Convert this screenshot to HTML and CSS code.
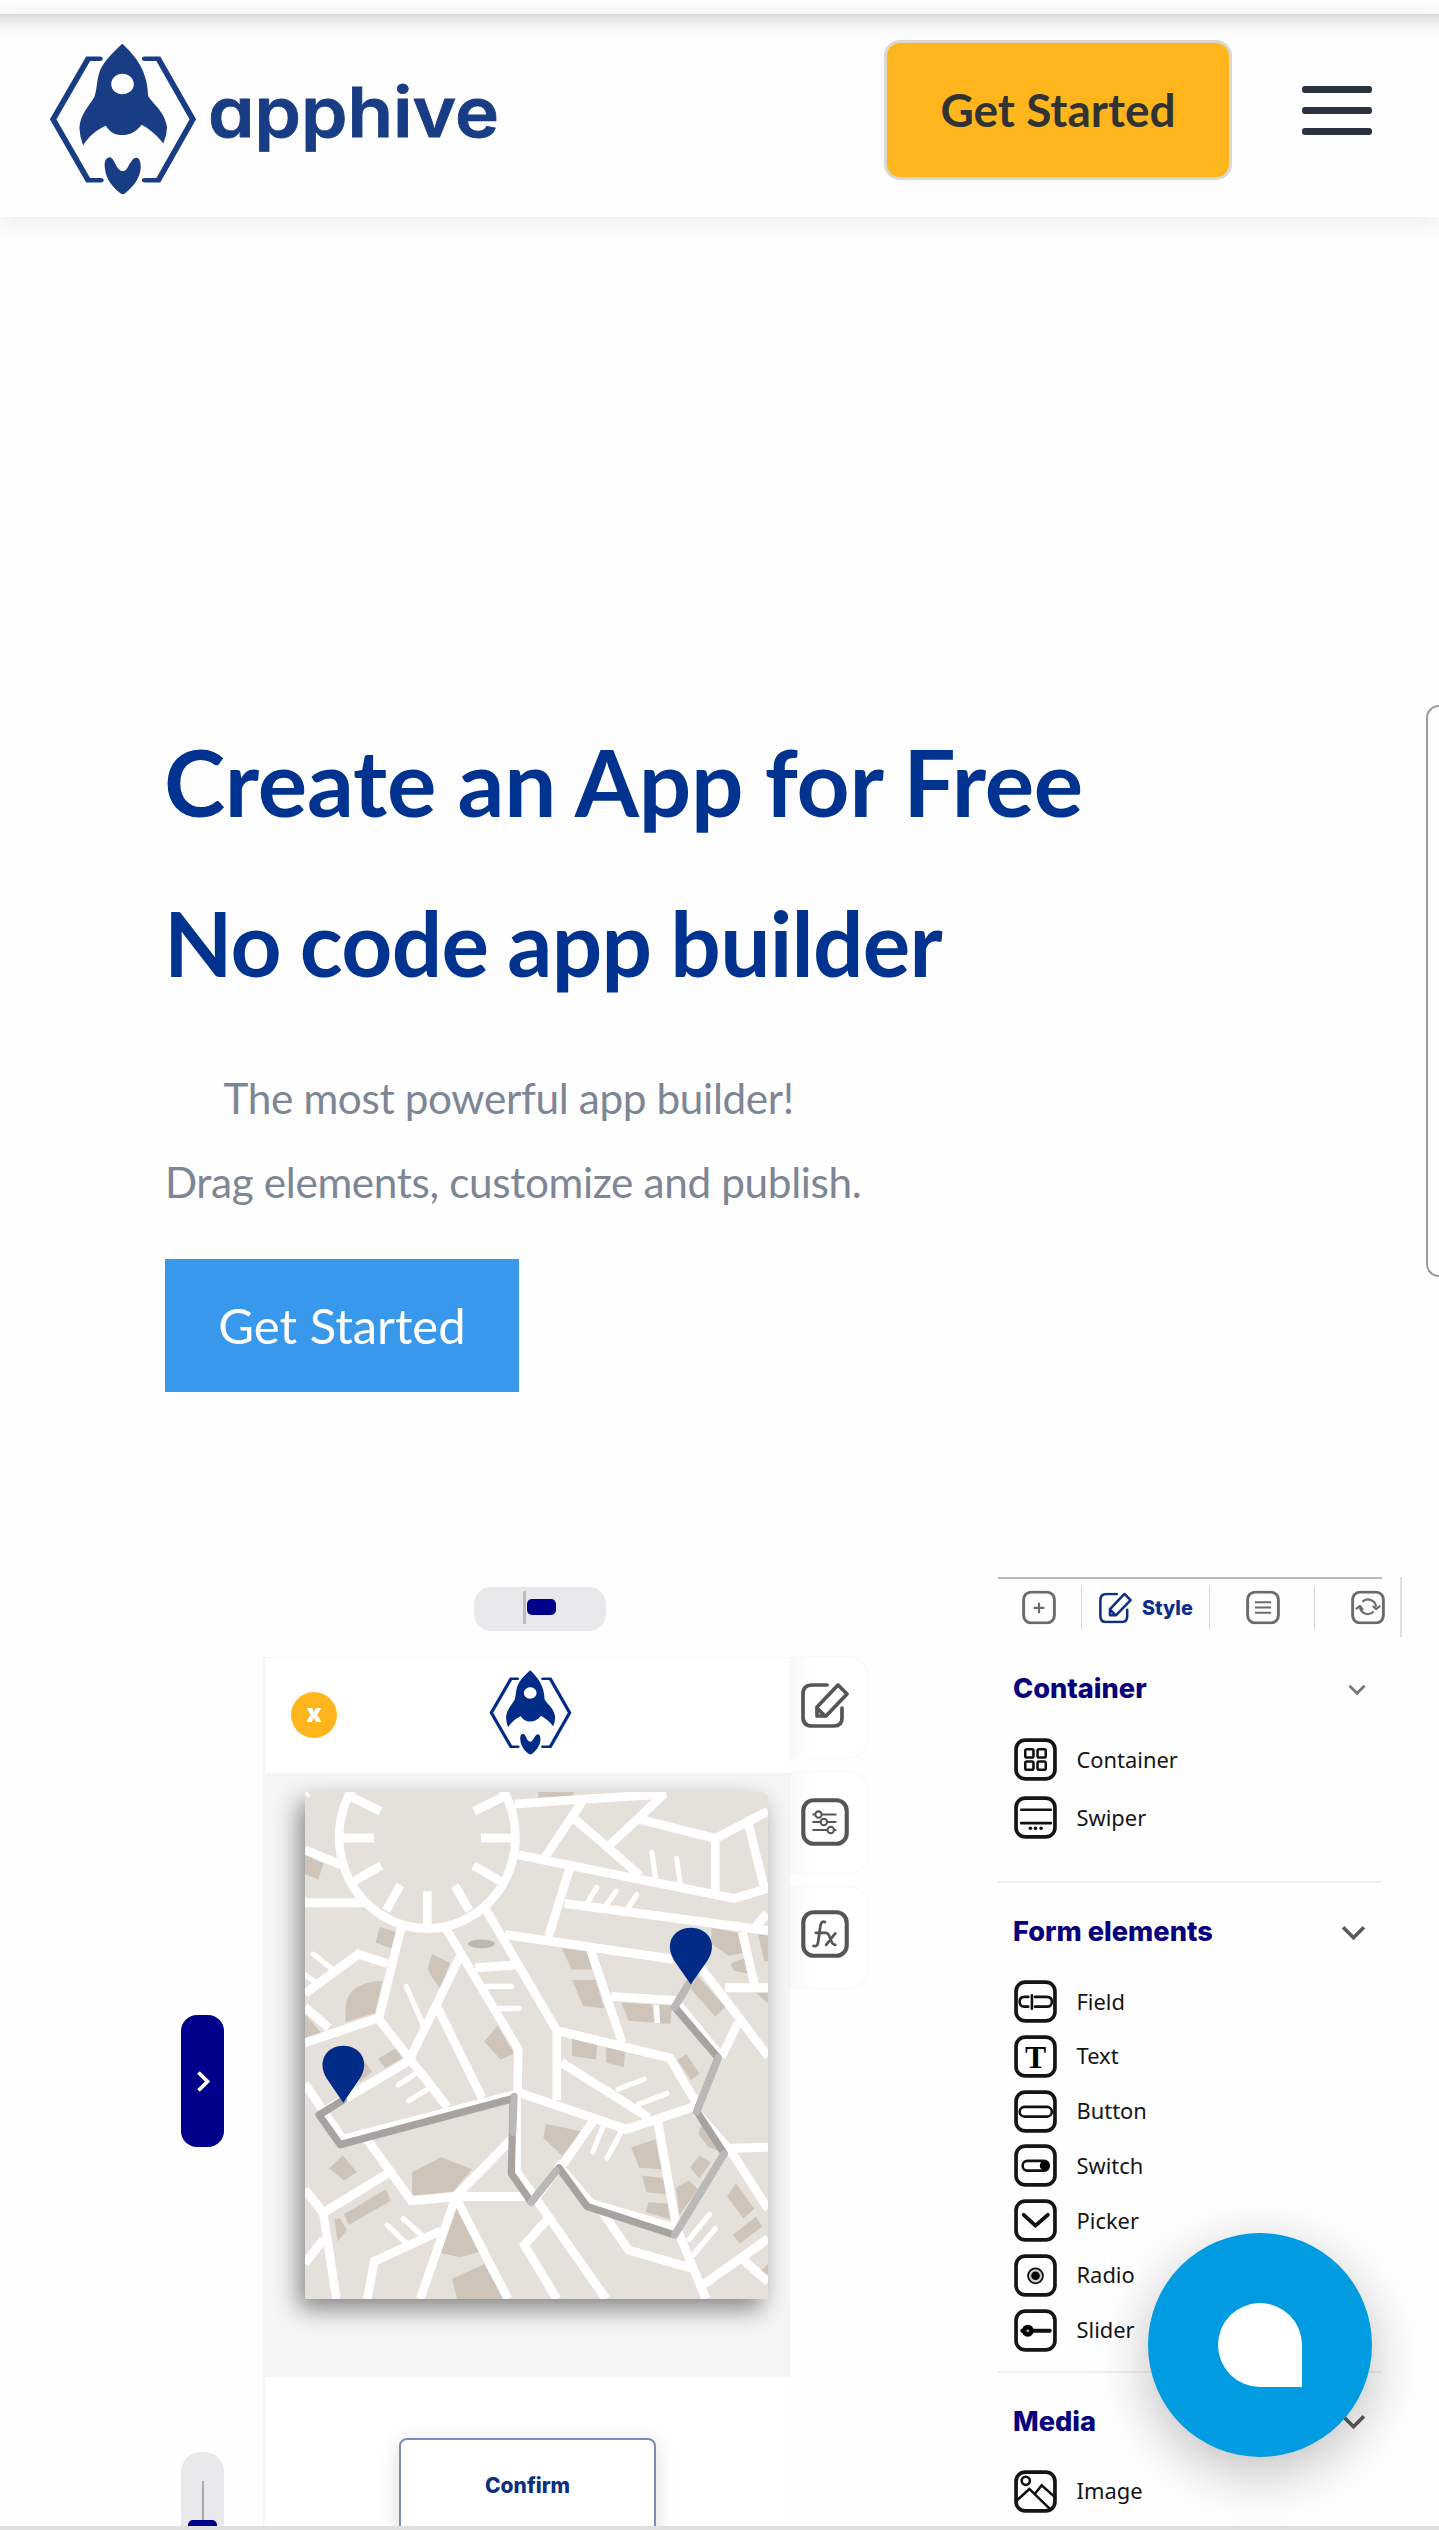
FILE: index.html
```html
<!DOCTYPE html>
<html lang="en">
<head>
<meta charset="utf-8">
<title>Apphive</title>
<link rel="stylesheet" href="styles.css">
</head>
<body>
<svg class="defs" aria-hidden="true">
  <symbol id="rocket" viewBox="108 130 321 454" preserveAspectRatio="none">
    <g fill="none" stroke="currentColor" stroke-width="13" stroke-linecap="round" stroke-linejoin="miter">
      <path d="M218 177H193L117 358L193 540H220"/>
      <path d="M316 177H345L420 358L345 540H316"/>
    </g>
    <path fill="currentColor" fill-rule="evenodd" d="M267 132C295 168 322 212 323 288C333 312 360 335 364 382Q364 406 356 430C346 412 330 390 309 374C296 396 283 405 267 405C251 405 241 397 231 377C210 390 192 412 182 436Q175 412 174 385C175 345 193 322 206 292C213 270 210 245 219 211C228 183 248 156 267 132ZM267 222C254 222 243 236 243 253S254 283 267 283S292 270 292 253S281 222 267 222Z"/>
    <path fill="currentColor" d="M239 471C248 472 250 489 256 501C264 516 271 517 278 503C285 488 289 473 298 473C305 474 307 488 307 502C306 536 288 563 273 579Q268 584 263 579C248 564 231 538 229 502C228 486 230 473 239 471Z"/>
  </symbol>
  <symbol id="box" viewBox="0 0 42 42"><rect x="2" y="2" width="38" height="38" rx="9" fill="none" stroke="currentColor" stroke-width="3.6"/></symbol>
  <symbol id="edit" viewBox="0 0 48 45">
    <g fill="none" stroke="currentColor" stroke-width="3.7" stroke-linejoin="round" stroke-linecap="round">
      <path d="M26 2H11Q2 2 2 11V34Q2 43 11 43H33Q41 43 41 35V25"/>
      <path d="M16 24L37 2L46 11L25 33H16ZM16 25L24 33"/>
    </g>
  </symbol>
</svg>

<div class="status"></div>
<header class="navbar">
  <a class="brand" href="#">
    <svg class="brand-mark"><use href="#rocket"/></svg>
    <svg class="brand-name" viewBox="0 0 290 90"><text x="-1" y="60.5" textLength="291" lengthAdjust="spacingAndGlyphs">apphive</text></svg>
  </a>
  <a class="nav-cta" href="#">Get Started</a>
  <button class="burger" aria-label="Menu"><span></span><span></span><span></span></button>
</header>

<main>
  <section class="hero">
    <div class="hero-copy">
      <h1>Create an App for Free</h1>
      <h2>No code app builder</h2>
      <p><span class="lead">The most powerful app builder!</span><br>Drag elements, customize and publish.</p>
      <a class="hero-cta" href="#">Get Started</a>
    </div>
    <div class="device-edge"></div>
  </section>

  <section class="editor">
    <div class="rail">
      <div class="rail-toggle"><svg viewBox="0 0 12 18"><path d="M3 3L9 9L3 15"/></svg></div>
      <div class="rail-slider"><i></i><b></b></div>
    </div>

    <div class="stage">
      <div class="pill"><i></i><b></b></div>
      <div class="phone">
        <div class="phone-bar">
          <span class="close">x</span>
          <svg class="phone-logo"><use href="#rocket"/></svg>
        </div>
        <div class="phone-body">
          <svg class="map" viewBox="131 88 1344 1419" preserveAspectRatio="none">
            <rect x="131" y="88" width="1344" height="1419" fill="#e5e0da"/>
            <g fill="#cfc4ba">
              <path d="M131 262L184 288L170 332L131 318Z"/>
              <path d="M808 88H912L905 100L808 104Z"/>
              <path d="M348 465L396 480L382 525L336 510Z"/>
              <path d="M500 542L552 566L524 638C505 615 492 600 487 580Z"/>
              <path d="M356 617C290 618 250 645 249 690V732L334 706Z"/>
              <path d="M690 742L734 812L735 822L699 837L651 787Z"/>
              <path d="M131 710L182 765L131 784Z"/>
              <path d="M343 835L392 806L414 832L364 861Z"/>
              <path d="M300 838L326 870L290 900Z"/>
              <path d="M876 525L952 534L964 585H905Z"/>
              <path d="M907 614H974L1000 694L938 687Z"/>
              <path d="M1049 677L1139 683L1144 734L1070 728Z"/>
              <path d="M1159 684H1196L1192 736H1162Z"/>
              <path d="M906 776L979 790L976 837L906 827Z"/>
              <path d="M1005 802L1060 815L1057 858L1005 846Z"/>
              <path d="M1238 822L1276 876L1252 895L1212 838Z"/>
              <path d="M1269 600L1351 689L1322 717L1252 640Z"/>
              <path d="M1311 468L1396 484L1406 538L1361 546L1310 513Z"/>
              <path d="M1366 568L1408 552L1416 597L1375 588Z"/>
              <path d="M1446 486L1475 490V562H1464Z"/>
              <path d="M1440 650H1475V680Z"/>
              <path d="M830 1017L936 1038L877 1106L823 1056Z"/>
              <path d="M1078 1082L1148 1060L1166 1144L1101 1140Z"/>
              <path d="M1110 1162L1170 1168L1178 1214L1122 1208Z"/>
              <path d="M1128 1236L1184 1240L1192 1284L1120 1264Z"/>
              <path d="M1208 1194L1246 1175L1272 1200L1218 1272Z"/>
              <path d="M1276 1106L1310 1124L1275 1170L1249 1138Z"/>
              <path d="M1277 1030L1290 1015L1340 1098L1300 1080L1273 1045Z"/>
              <path d="M1382 1182L1435 1254L1404 1282L1356 1220Z"/>
              <path d="M1440 1276L1458 1304L1394 1352L1372 1328Z"/>
              <path d="M1475 1408V1440L1456 1428Z"/>
              <path d="M240 1105L282 1152L244 1175L202 1142Z"/>
              <path d="M366 1200L380 1232L258 1300L244 1270Z"/>
              <path d="M216 1284L232 1280L253 1314L226 1346Z"/>
              <path d="M442 1152L526 1110L616 1144L560 1206L442 1218Z"/>
              <path d="M570 1244L640 1374L580 1390L526 1378Z"/>
              <path d="M558 1450L651 1410L710 1507H572Z"/>
            </g>
            <g fill="none" stroke="#fff" stroke-width="25">
              <circle cx="486" cy="214" r="256"/>
              <path d="M486 366V460M231 217H331M642 217H742M262 100L350 142M710 100L622 142M352 294L272 338M620 294L700 338M408 348L366 420M566 350L608 420" />
              <path d="M131 250L235 292M131 398H310M131 96L138 88"/>
              <path d="M740 122L940 108L1180 94M940 108L828 270M912 162L1104 322M1175 92L1012 240M1100 164L1322 218L1475 142M1322 218V370M1418 178L1464 356"/>
              <path d="M750 264L1376 386L1475 358M900 300L838 492M885 400L1475 476M1440 464L1472 428"/>
              <path d="M712 487L1200 556M1280 580L1388 716L1475 828"/>
              <path d="M655 415L862 756V950M862 756L1190 832L1268 960M960 530L1052 790M1020 660L1212 672M540 470L750 808L748 928L1064 1032L1268 966M625 580L746 572M875 845L1130 1000"/>
              <path d="M412 460L345 724L545 970M345 720L131 790M131 652L286 542L370 568M131 690L200 748M580 550L435 836M515 690L645 944M430 842L180 984M131 905L240 1060L745 934M308 1056L440 1232L570 1220H770"/>
              <path d="M1400 480L1438 636M1350 636H1475M1388 734L1340 830"/>
              <path d="M1212 680L1340 830M1268 984L1372 1100L1475 1255M1360 1086L1475 1082"/>
              <path d="M745 934V1150L800 1225L870 1136L962 1240L1210 1310M570 1218L745 1045M970 1005L880 1130M1155 1010L1210 1310"/>
              <path d="M570 1218L465 1507M570 1225L720 1507M800 1225L1005 1507M835 1284L768 1356L862 1507M985 1250L1070 1370L1250 1420M1215 1320L1295 1507M1290 1465L1475 1338M1400 1394L1475 1460"/>
              <path d="M131 1200L184 1266L372 1155M184 1266L222 1507M184 1340L131 1408M525 1316L332 1402L312 1507"/>
            </g>
            <g fill="none" stroke="#fff" stroke-width="15" stroke-linecap="round">
              <path d="M1138 258L1148 325M1210 274L1220 345M978 355L948 402M1034 366L1006 404M1094 376L1066 416M425 632L474 740M155 542L210 584M131 600L160 620M650 632H730M695 694H752M452 876L402 908M490 918L432 952M1040 920L1115 892M1100 962L1182 932M996 1025L966 1096M1048 1040L1008 1112M370 1300L428 1354M416 1282L474 1332M1305 1270L1246 1340M1322 1310L1260 1382"/>
              <path d="M1151 684L1154 734" stroke-linecap="butt"/>
            </g>
            <ellipse cx="643" cy="513" rx="39" ry="12" fill="#bdb7b2"/>
            <g fill="none" stroke-width="21" stroke-linejoin="round" stroke-linecap="round">
              <path stroke="#a8a39f" d="M242 950L172 992L233 1075L735 946L730 1156L788 1236L868 1140L950 1248L1204 1328L1348 1100L1268 982L1330 832L1204 690L1245 625"/>
              <path stroke="#bbb9b7" d="M738 940L734 1040M788 1236L860 1148M1204 1328L1348 1100M1268 982L1330 832M1204 690L1245 625"/>
            </g>
            <g fill="#002c88">
              <path d="M242 958L194 890C165 845 190 798 242 798S320 845 290 890Z"/>
              <path d="M1251 627L1203 560C1173 515 1198 468 1251 468S1330 515 1299 560Z"/>
            </g>
          </svg>
        </div>
        <div class="phone-foot"><span class="confirm">Confirm</span></div>
      </div>
    </div>

    <div class="tabs">
      <div class="tab"><svg viewBox="0 0 48 45"><use href="#edit"/></svg></div>
      <div class="tab"><svg viewBox="0 0 42 42"><use href="#box"/>
        <g fill="none" stroke="currentColor" stroke-width="1.8"><path d="M10 14.5H12M18.500 14.500H31M10 21H17M23 21H31M10 28H23M29 28H31"/><circle cx="15.300" cy="14.500" r="2.800"/><circle cx="20" cy="21" r="2.800"/><circle cx="26" cy="28" r="2.800"/></g></svg></div>
      <div class="tab"><svg viewBox="0 0 42 42"><use href="#box"/>
        <g fill="none" stroke="currentColor" stroke-width="2.400" stroke-linecap="round"><path d="M21 10.500C17.500 9 17 13 16.500 17L15 28C14.500 31.500 13 32 11 31.500M13 20H21M22 20C26 20 25 30.500 30 30.500M30 20.500L22 30.500"/></g></svg></div>
    </div>

    <aside class="panel">
      <div class="toolbar">
        <div class="tool t1"><svg viewBox="0 0 42 42"><use href="#box"/><path d="M21 15V28M14.500 21.500H27.500"/></svg></div>
        <div class="tool t2"><svg class="pen" viewBox="0 0 48 45"><use href="#edit"/></svg>Style</div>
        <div class="tool t3"><svg viewBox="0 0 42 42"><use href="#box"/><path d="M11 14.500H31M11 21H31M11 27.500H31"/></svg></div>
        <div class="tool t4"><svg viewBox="0 0 42 42"><use href="#box"/><path d="M14 14A10 10 0 0 1 31 20M28 26A10 10 0 0 1 11 21M6 23L11 19L15 24M27 19L31 23L36 19"/></svg></div>
      </div>
      <h3 class="first">Container<svg class="small" viewBox="0 0 24 16"><path d="M2 3L12 13L22 3"/></svg></h3>
      <ul class="wide">
        <li><svg viewBox="0 0 42 42"><use href="#box"/><g class="ln"><rect x="11" y="11" width="8" height="8" rx="1.500"/><rect x="23" y="11" width="8" height="8" rx="1.500"/><rect x="11" y="23" width="8" height="8" rx="1.500"/><rect x="23" y="23" width="8" height="8" rx="1.500"/></g></svg>Container</li>
        <li><svg viewBox="0 0 42 42"><use href="#box"/><g class="ln"><path d="M7 13.500H36M7 26.500H36"/></g><circle cx="16" cy="31.500" r="1.700"/><circle cx="21" cy="31.500" r="1.700"/><circle cx="26.500" cy="31.500" r="1.700"/></svg>Swiper</li>
      </ul>
      <h3>Form elements<svg viewBox="0 0 24 16"><path d="M2 3L12 13L22 3"/></svg></h3>
      <ul>
        <li><svg viewBox="0 0 42 42"><use href="#box"/><g class="ln"><path d="M14 16.500H10Q5.500 16.500 5.500 21.300T10 26H14M20.500 16.500H32Q37 16.500 37 21.300T32 26H20.500M17.500 15V28"/></g></svg>Field</li>
        <li><svg viewBox="0 0 42 42"><use href="#box"/><text class="glyph" x="21" y="32" text-anchor="middle">T</text></svg>Text</li>
        <li><svg viewBox="0 0 42 42"><use href="#box"/><g class="ln"><rect x="5.500" y="16.500" width="31.500" height="9.500" rx="4.700"/></g></svg>Button</li>
        <li><svg viewBox="0 0 42 42"><use href="#box"/><g class="ln"><rect x="8.500" y="16.500" width="25.500" height="9.500" rx="4.500"/></g><circle cx="29.500" cy="21.200" r="4.300"/></svg>Switch</li>
        <li><svg viewBox="0 0 42 42"><use href="#box"/><path class="thick" d="M9.500 15.500L21 26L33 15.500"/></svg>Picker</li>
        <li><svg viewBox="0 0 42 42"><use href="#box"/><circle cx="21" cy="21.300" r="7.300" fill="#ccc" stroke="#111" stroke-width="1.700"/><circle cx="21" cy="21.300" r="4.200"/></svg>Radio</li>
        <li><svg viewBox="0 0 42 42"><use href="#box"/><path class="thick" d="M8 21.300H35"/><circle cx="13.500" cy="21.300" r="5.800"/><circle cx="13.500" cy="21.300" r="1.500" fill="#999"/></svg>Slider</li>
      </ul>
      <h3>Media<svg viewBox="0 0 24 16"><path d="M2 3L12 13L22 3"/></svg></h3>
      <ul>
        <li><svg viewBox="0 0 42 42"><use href="#box"/><g class="ln"><circle cx="11.500" cy="10.500" r="4"/><path d="M3 29.500L15 18.500L36 39M21 22.500L27 15L40 26.500"/></g></svg>Image</li>
      </ul>
    </aside>
  </section>
</main>
<div class="bottom-bar"></div>
<button class="chat" aria-label="Chat"><span></span></button>
</body>
</html>
```
FILE: styles.css
```css
* { box-sizing: border-box; }
body {
  margin: 0;
  height: 2530px;
  display: flex;
  flex-direction: column;
  position: relative;
  overflow: hidden;
  background: #fefefe;
  font-family: Lato, "Liberation Sans", sans-serif;
}
a { color: inherit; text-decoration: none; }
button { border: 0; padding: 0; background: none; }
h1, h2, h3, p, ul { margin: 0; padding: 0; }
ul { list-style: none; }
.defs { position: absolute; width: 0; height: 0; }

.status { height: 14px; flex: none; }
.navbar {
  flex: none;
  height: 203px;
  padding: 0 67px 0 49px;
  display: flex;
  align-items: flex-start;
  background: linear-gradient(#d9d9d9 0, #e7e7e7 5px, #f3f3f3 12px, #fafafa 17px, #fefefe 27px);
  box-shadow: 0 4px 24px rgba(50, 60, 80, .11);
}
.brand { display: flex; color: #183d85; }
.brand-mark { width: 148px; height: 152px; margin-top: 29px; }
.brand-name { width: 290px; height: 90px; margin: 62px 0 0 12px; overflow: visible; }
.brand-name text {
  font: 600 69px Inter, sans-serif;
  font-feature-settings: "cv11";
  fill: #183d85;
  stroke: #183d85;
  stroke-width: .8px;
}
.nav-cta {
  width: 348px;
  height: 140px;
  margin: 26px 70px 0 auto;
  padding-bottom: 2px;
  display: flex;
  align-items: center;
  justify-content: center;
  border: 3px solid #dad8cf;
  border-radius: 16px;
  background: #ffb61d;
  color: #303331;
  font-size: 46px;
  font-weight: 700;
}
.burger { width: 70px; margin-top: 72px; display: flex; flex-direction: column; gap: 14px; }
.burger span { height: 7px; border-radius: 3px; background: #2a3240; }

.hero { height: 1360px; padding: 509px 0 0 165px; display: flex; align-items: flex-start; }
.hero-copy { flex: 1; display: flex; flex-direction: column; align-items: flex-start; }
h1, h2 { color: #003290; white-space: nowrap; font-weight: 700; }
h1 { font-size: 92.5px; line-height: 111px; margin-left: -1px; letter-spacing: -.2px; word-spacing: -.8px; }
h2 { font-size: 89px; line-height: 107px; margin: 52px 0 0 -1px; letter-spacing: -.7px; word-spacing: -2px; }
.hero-copy p { margin-top: 60px; color: #7d8695; font-size: 42.3px; line-height: 84px; letter-spacing: -.36px; text-align: center; white-space: nowrap; }
.lead { padding-right: 9px; }
.hero-cta {
  width: 354px;
  height: 133px;
  margin-top: 35px;
  padding-bottom: 2px;
  display: flex;
  align-items: center;
  justify-content: center;
  background: #3898ec;
  color: #fff;
  font-size: 49px;
}
.device-edge {
  width: 13px;
  height: 572px;
  margin-top: -21px;
  border: 2px solid #9a9a9a;
  border-right: 0;
  border-radius: 14px 0 0 14px;
  background: #fcfcfc;
}

.editor { height: 949px; padding-left: 181px; display: flex; align-items: flex-start; overflow: hidden; }
.rail { width: 43px; display: flex; flex-direction: column; gap: 305px; padding-top: 438px; }
.rail-toggle { height: 132px; display: flex; align-items: center; justify-content: center; border-radius: 16px; background: #00008a; }
.rail-toggle svg { width: 18px; height: 27px; fill: none; stroke: #fff; stroke-width: 2.5; }
.rail-slider { height: 132px; padding-top: 29px; display: flex; flex-direction: column; align-items: center; border-radius: 20px; background: #e9e9eb; }
.rail-slider i { width: 2px; height: 39px; background: #a9a9ab; }
.rail-slider b { width: 29px; height: 44px; border-radius: 5px; background: #00008a; }

.stage { width: 527px; margin-left: 39px; padding-top: 10px; display: flex; flex-direction: column; }
.pill { width: 132px; height: 44px; margin-left: 211px; padding: 4px 0 0 49px; display: flex; gap: 3px; border-radius: 17px; background: #e9e9eb; }
.pill i { width: 3px; height: 33px; background: #bcbcbc; }
.pill b { width: 29px; height: 16px; margin-top: 8px; margin-left: -2px; border-radius: 5px; background: #00008a; }
.phone { margin-top: 26px; border: 1px solid #f6f6f6; border-width: 1px 0 0 2px; }
.phone-bar { height: 115px; padding: 12px 0 0 26px; display: flex; background: #fff; }
.close { width: 46px; height: 46px; margin-top: 22px; padding-bottom: 3px; display: flex; align-items: center; justify-content: center; border-radius: 50%; background: #ffb61d; color: #fff; font: 900 25px/1 Inter, sans-serif; }
.phone-logo { width: 83px; height: 85px; margin-left: 152px; color: #002c88; }
.phone-body { height: 604px; padding: 19px 0 0 40px; background: #f5f5f5; }
.map { display: block; width: 463px; height: 507px; border-radius: 2px 6px 2px 2px; box-shadow: -6px 10px 24px rgba(0, 0, 0, .46); }
.phone-foot { height: 240px; padding: 61px 0 0 134px; background: #fff; }
.confirm { width: 257px; height: 102px; display: flex; align-items: center; justify-content: center; padding-bottom: 7px; border: 2px solid #7a8cb9; border-radius: 8px; background: #fff; box-shadow: 0 4px 20px rgba(0, 0, 0, .15); color: #0d2f80; font: 800 21px Inter, sans-serif; }

.tabs { width: 78px; padding-top: 80px; display: flex; flex-direction: column; gap: 14px; color: #555; }
.tab { height: 101px; padding: 26px 0 0 11px; border-radius: 0 20px 20px 0; background: linear-gradient(90deg, #f8f8f8, #fff 22px); box-shadow: 0 0 1px rgba(0, 0, 0, .2); }
.tab svg { display: block; width: 48px; height: 48px; }
.tab:first-child svg { height: 45px; }
.tab:last-child { padding-top: 23px; }

.panel { width: 404px; margin-left: 130px; }
.toolbar { width: 404px; height: 60px; display: flex; align-items: flex-start; color: #6b6b6b; background: linear-gradient(#b9b9b9, #b9b9b9) 0 0 / 384px 2px no-repeat; border-right: 2px solid #dedede; }
.tool { height: 43px; margin-top: 9px; display: flex; align-items: center; border-right: 1px solid #d5d5d5; }
.tool svg { width: 34px; height: 35px; fill: none; stroke: currentColor; stroke-width: 2.6; }
.t1 { width: 84px; padding-left: 24px; }
.t2 { width: 128px; padding-left: 17px; gap: 10px; color: #0d2f87; font: 800 19.8px Inter, sans-serif; }
.tool .pen { width: 33px; height: 32px; }
.t3 { width: 105px; padding-left: 36px; }
.t4 { padding-left: 36px; border: 0; }
.panel h3 { width: 384px; padding: 0 16px 0 15px; display: flex; align-items: center; justify-content: space-between; color: #08007d; font: 800 27.2px/36px Inter, sans-serif; }
.panel h3 svg { width: 25px; height: 17px; fill: none; stroke: #5b5b5b; stroke-width: 3.6; }
.panel h3 svg.small { width: 18px; height: 13px; stroke: #777; }
.panel h3.first { margin-top: 34px; }
.panel ul { width: 384px; padding: 30px 0 19px 15.5px; display: flex; flex-direction: column; gap: 11.8px; color: #151515; border-bottom: 2px solid #f0f0f0; }
.panel ul.wide { gap: 15px; padding: 31px 0 42px 15.5px; }
.panel ul + h3 { margin-top: 31px; }
.panel li { height: 43px; display: flex; align-items: center; gap: 20px; font: 21.9px/40px "Noto Sans", sans-serif; }
.panel li svg { width: 43px; height: 43px; }
.ln { fill: none; stroke: #111; stroke-width: 2.5; stroke-linecap: round; }
.thick { fill: none; stroke: #111; stroke-width: 3.8; stroke-linecap: round; stroke-linejoin: round; }
.glyph { font: 700 31px "Liberation Serif", serif; }

.bottom-bar { height: 4px; flex: none; background: #e0e0e0; }
.chat {
  position: absolute;
  left: 1148px;
  top: 2233px;
  width: 224px;
  height: 224px;
  display: flex;
  align-items: center;
  justify-content: center;
  border-radius: 50%;
  background: #009be0;
  box-shadow: 0 16px 56px rgba(0, 0, 0, .25);
}
.chat span { width: 84px; height: 84px; border-radius: 50% 50% 0 50%; background: #fff; }
```
